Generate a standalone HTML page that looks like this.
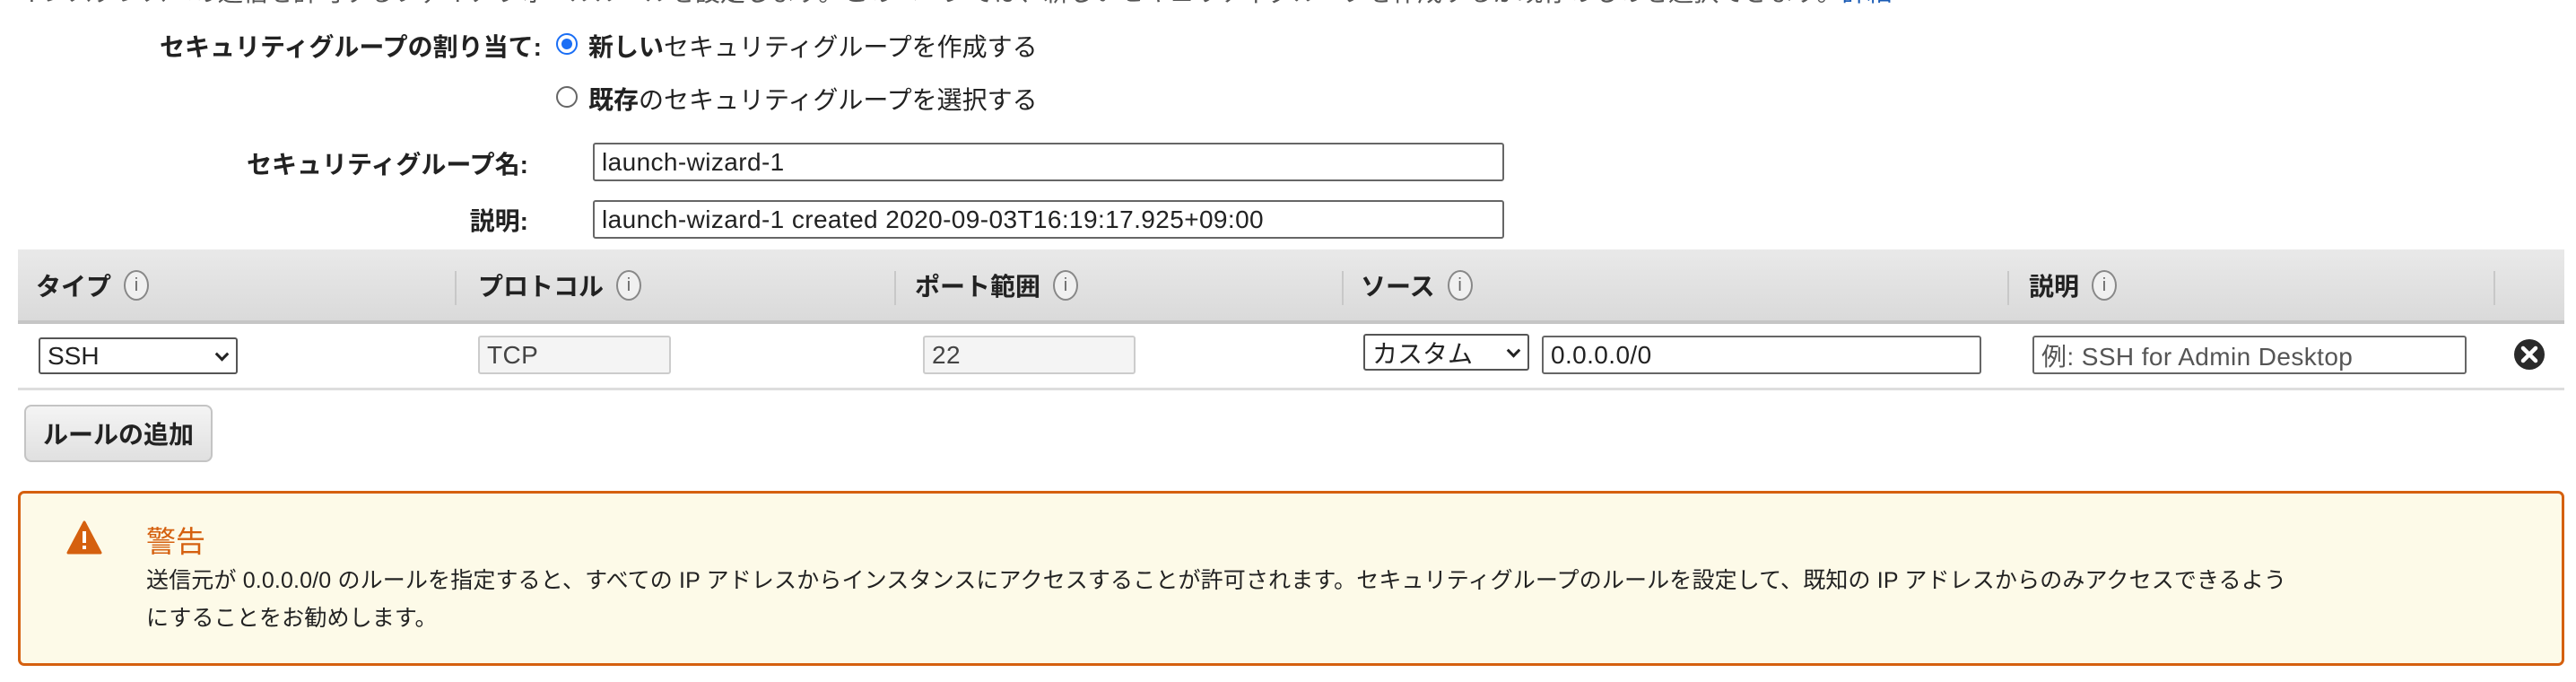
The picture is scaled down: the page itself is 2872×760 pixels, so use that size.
<!DOCTYPE html>
<html><head><meta charset="utf-8"><style>
*{box-sizing:border-box;margin:0;padding:0}
body{width:2872px;height:760px;background:#fff;position:relative;overflow:hidden;font-family:"Liberation Sans","Noto Sans CJK JP",sans-serif;color:#222;font-size:28px}
.a{position:absolute;white-space:nowrap}
.lbl{font-weight:bold;text-align:right}
.inp{position:absolute;border:2px solid #666;border-radius:3px;background:#fff;padding-left:8px;font-size:28px;letter-spacing:0.4px;display:flex;align-items:center;white-space:nowrap}
.ro{border:2px solid #ccc;background:#f4f4f4;color:#444}
.sel{position:absolute;border:2px solid #555;border-radius:3px;background:#fff;padding-left:8px;font-size:28px;display:flex;align-items:center}
.sel:after{content:"";position:absolute;right:10px;top:50%;width:8px;height:8px;border-right:3px solid #222;border-bottom:3px solid #222;transform:translateY(-70%) rotate(45deg)}
.hd{position:absolute;top:278px;left:20px;width:2839px;height:83px;background:linear-gradient(#e9e9e9,#dadada);border-bottom:4px solid #c5c5c5}
.sep{position:absolute;top:24px;height:38px;border-left:2px solid #c8c8c8}
.ht{position:absolute;top:20px;font-weight:bold;font-size:28px;display:flex;align-items:center;white-space:nowrap}
.i{display:inline-block;width:28px;height:34px;border:2px solid #888;border-radius:50%;margin-left:14px;font-size:20px;font-weight:normal;text-align:center;line-height:30px;color:#666;background:#f0f0f0}
.radio{position:absolute;width:24px;height:24px;border-radius:50%;border:2px solid #555;background:#fff}
</style></head><body>
<div class="a" style="top:-30px;left:20px;color:#555;font-size:28px">インスタンスへの通信を許可するファイアウォールルールを設定します。このページでは、新しいセキュリティグループを作成するか既存のものを選択できます。<span style="color:#1a5bb5">詳細</span></div>

<div class="a lbl" style="right:2268px;top:31px">セキュリティグループの割り当て:</div>
<div class="radio" style="left:620px;top:37px;border-color:#1a6ef5;"><div style="position:absolute;left:4px;top:4px;width:12px;height:12px;border-radius:50%;background:#1a6ef5"></div></div>
<div class="a" style="left:656px;top:31px"><b>新しい</b>セキュリティグループを作成する</div>
<div class="radio" style="left:620px;top:96px;border-color:#666"></div>
<div class="a" style="left:656px;top:90px"><b>既存</b>のセキュリティグループを選択する</div>

<div class="a lbl" style="right:2283px;top:162px">セキュリティグループ名:</div>
<div class="inp" style="left:661px;top:159px;width:1016px;height:43px">launch-wizard-1</div>
<div class="a lbl" style="right:2283px;top:225px">説明:</div>
<div class="inp" style="left:661px;top:223px;width:1016px;height:43px">launch-wizard-1 created 2020-09-03T16:19:17.925+09:00</div>

<div class="hd">
<div class="ht" style="left:20px">タイプ<span class="i">i</span></div>
<div class="sep" style="left:487px"></div>
<div class="ht" style="left:513px">プロトコル<span class="i">i</span></div>
<div class="sep" style="left:977px"></div>
<div class="ht" style="left:1000px">ポート範囲<span class="i">i</span></div>
<div class="sep" style="left:1476px"></div>
<div class="ht" style="left:1497px">ソース<span class="i">i</span></div>
<div class="sep" style="left:2218px"></div>
<div class="ht" style="left:2242px">説明<span class="i">i</span></div>
<div class="sep" style="left:2760px"></div>
</div>

<div class="sel" style="left:43px;top:376px;width:222px;height:41px">SSH</div>
<div class="inp ro" style="left:533px;top:374px;width:215px;height:43px">TCP</div>
<div class="inp ro" style="left:1029px;top:374px;width:237px;height:43px">22</div>
<div class="sel" style="left:1520px;top:372px;width:185px;height:41px">カスタム</div>
<div class="inp" style="left:1719px;top:374px;width:490px;height:43px">0.0.0.0/0</div>
<div class="inp" style="left:2266px;top:374px;width:484px;height:43px;color:#555">例: SSH for Admin Desktop</div>
<svg class="a" style="left:2802px;top:377px" width="36" height="36" viewBox="0 0 36 36"><circle cx="18" cy="18" r="17" fill="#2a2a2a"/><path d="M11 11L25 25M25 11L11 25" stroke="#fff" stroke-width="4.5" stroke-linecap="round"/></svg>
<div class="a" style="left:20px;top:432px;width:2839px;height:3px;background:#ddd"></div>

<div class="a" style="left:27px;top:451px;width:210px;height:64px;border:2px solid #c4c4c4;border-radius:8px;background:linear-gradient(#f4f4f4,#e0e0e0);font-weight:bold;font-size:28px;display:flex;align-items:center;justify-content:center">ルールの追加</div>

<div class="a" style="left:20px;top:547px;width:2839px;height:195px;border:3px solid #d5600f;border-radius:7px;background:#fdfae8"></div>
<svg class="a" style="left:74px;top:580px" width="40" height="38" viewBox="0 0 40 38"><path d="M20 2L38 36H2Z" fill="#d5600f" stroke="#d5600f" stroke-width="3" stroke-linejoin="round"/><rect x="18" y="12" width="4" height="13" fill="#fff"/><rect x="18" y="28" width="4" height="4" fill="#fff"/></svg>
<div class="a" style="left:163px;top:577px;color:#d5600f;font-size:33px">警告</div>
<div class="a" style="left:163px;top:626px;font-size:25px;line-height:42px;color:#222;letter-spacing:0.15px">送信元が 0.0.0.0/0 のルールを指定すると、すべての IP アドレスからインスタンスにアクセスすることが許可されます。セキュリティグループのルールを設定して、既知の IP アドレスからのみアクセスできるよう<br>にすることをお勧めします。</div>
</body></html>
